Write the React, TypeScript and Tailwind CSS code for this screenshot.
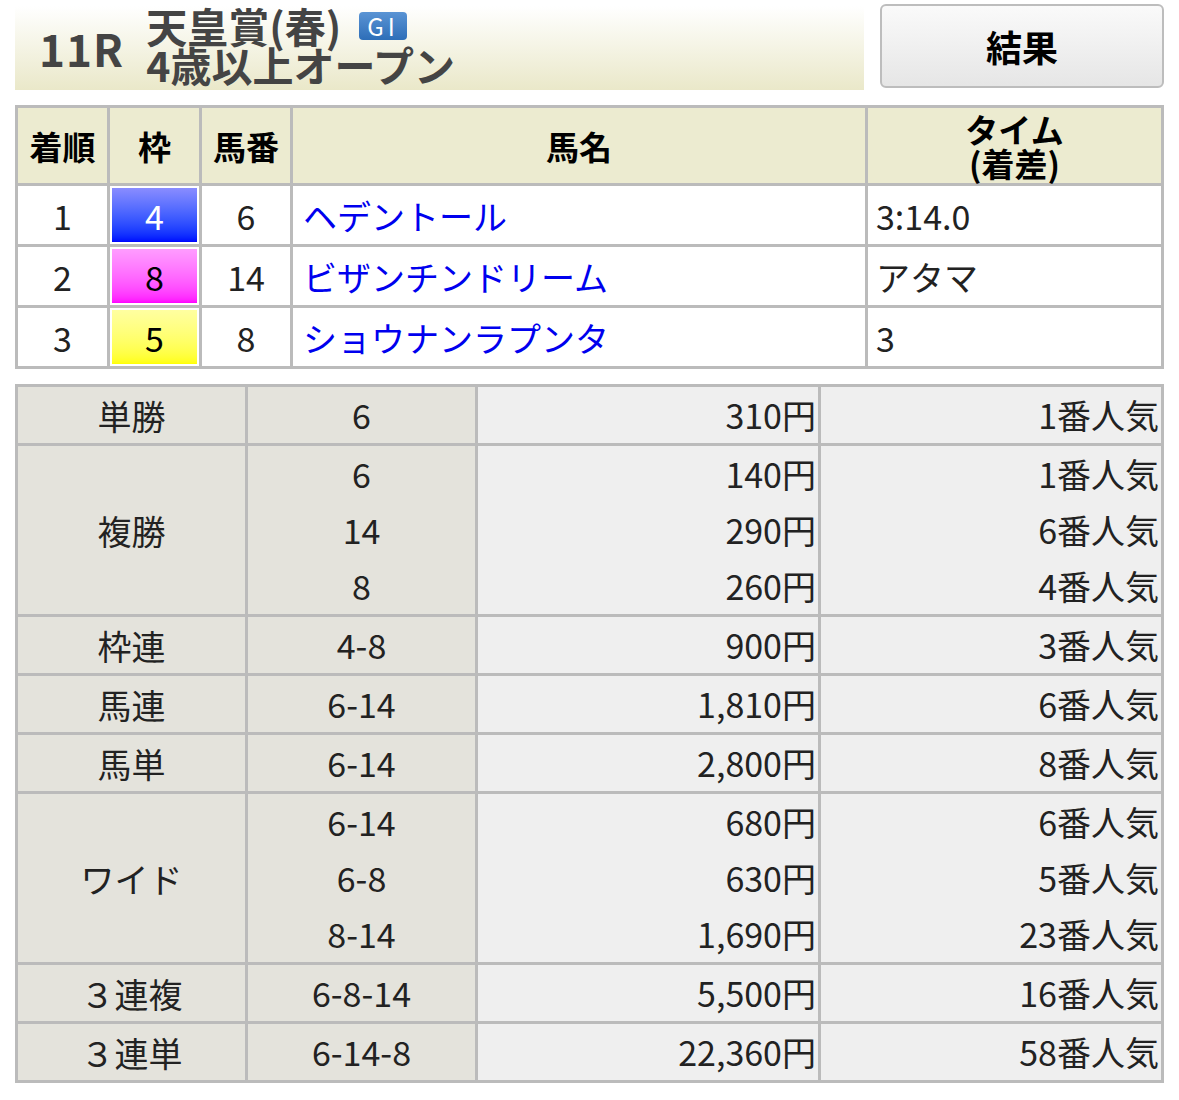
const FONT = { fontFamily: '"Noto Sans CJK JP", "Noto Sans", sans-serif' };

const results = [
  { rank: "1", waku: "4", num: "6", name: "ヘデントール", time: "3:14.0", cls: "bg-gradient-to-b from-[#8a8cff] to-[#0000ff] text-white" },
  { rank: "2", waku: "8", num: "14", name: "ビザンチンドリーム", time: "アタマ", cls: "bg-gradient-to-b from-[#ff9cff] to-[#ff00ff] text-black" },
  { rank: "3", waku: "5", num: "8", name: "ショウナンラプンタ", time: "3", cls: "bg-gradient-to-b from-[#ffffa0] to-[#ffff00] text-black" },
];

const payouts: { label: string; rows: [string, string, string][] }[] = [
  { label: "単勝", rows: [["6", "310円", "1番人気"]] },
  { label: "複勝", rows: [["6", "140円", "1番人気"], ["14", "290円", "6番人気"], ["8", "260円", "4番人気"]] },
  { label: "枠連", rows: [["4-8", "900円", "3番人気"]] },
  { label: "馬連", rows: [["6-14", "1,810円", "6番人気"]] },
  { label: "馬単", rows: [["6-14", "2,800円", "8番人気"]] },
  { label: "ワイド", rows: [["6-14", "680円", "6番人気"], ["6-8", "630円", "5番人気"], ["8-14", "1,690円", "23番人気"]] },
  { label: "３連複", rows: [["6-8-14", "5,500円", "16番人気"]] },
  { label: "３連単", rows: [["6-14-8", "22,360円", "58番人気"]] },
];

export default function App() {
  const th = "border-[3px] border-[#bbbbbb] bg-[#ecebd0] font-bold text-[33px] leading-[34px] text-black";
  const td = "border-[3px] border-[#bbbbbb] h-[61px] text-[34px]";
  return (
    <div className="w-[1179px] bg-white pt-[4px] px-[15px] pb-[10px] text-[#222]" style={FONT}>
      <div className="flex items-stretch h-[86px]">
        <div className="flex-1 flex items-center bg-gradient-to-b from-white to-[#eae8c9] pl-[24px] mt-[2px]">
          <span className="text-[44px] font-bold text-[#444] mr-[22px] tracking-wide">11R</span>
          <div className="flex flex-col text-[#444] font-bold text-[41px] leading-[39px] -mt-[6px]">
            <div className="flex items-center">
              天皇賞(春)
              <span className="ml-[18px] bg-gradient-to-b from-[#5a94d4] to-[#2d6eb8] text-white text-[24px] leading-[28px] px-[8px] rounded-[4px] tracking-[4px] font-normal">GI</span>
            </div>
            <div>4歳以上オープン</div>
          </div>
        </div>
        <div className="w-[284px] ml-[16px] mb-[2px] rounded-[6px] border-2 border-[#bdbdbd] bg-gradient-to-b from-[#fafafa] to-[#e6e6e6] flex items-center justify-center text-[36px] font-bold text-black">
          結果
        </div>
      </div>

      <table className="w-full mt-[15px] border-collapse text-center table-fixed">
        <colgroup>
          <col className="w-[92px]" /><col className="w-[92px]" /><col className="w-[91px]" /><col className="w-[575px]" /><col />
        </colgroup>
        <thead>
          <tr className="h-[78px]">
            <th className={th}>着順</th>
            <th className={th}>枠</th>
            <th className={th}>馬番</th>
            <th className={th}>馬名</th>
            <th className={th}>タイム<br />(着差)</th>
          </tr>
        </thead>
        <tbody>
          {results.map((r) => (
            <tr key={r.rank}>
              <td className={td}>{r.rank}</td>
              <td className={td + " p-[2px]"}>
                <div className={"h-full min-h-[53px] flex items-center justify-center " + r.cls}>{r.waku}</div>
              </td>
              <td className={td}>{r.num}</td>
              <td className={td + " text-left pl-[10px] text-[#0000ee]"}>{r.name}</td>
              <td className={td + " text-left pl-[8px]"}>{r.time}</td>
            </tr>
          ))}
        </tbody>
      </table>

      <table className="w-full mt-[15px] border-collapse table-fixed text-[34px]">
        <colgroup>
          <col className="w-[230px]" /><col className="w-[230px]" /><col className="w-[343px]" /><col />
        </colgroup>
        <tbody>
          {payouts.map((p) => (
            <tr key={p.label}>
              <td className="border-[3px] border-[#bbbbbb] bg-[#e4e3dc] text-center h-[56px]">{p.label}</td>
              <td className="border-[3px] border-[#bbbbbb] bg-[#e4e3dc] text-center">
                {p.rows.map((r) => <div key={r[0]} className="h-[56px] leading-[56px]">{r[0]}</div>)}
              </td>
              <td className="border-[3px] border-[#bbbbbb] bg-[#efefef] text-right pr-[2px]">
                {p.rows.map((r) => <div key={r[0]} className="h-[56px] leading-[56px]">{r[1]}</div>)}
              </td>
              <td className="border-[3px] border-[#bbbbbb] bg-[#efefef] text-right pr-[2px]">
                {p.rows.map((r) => <div key={r[0]} className="h-[56px] leading-[56px]">{r[2]}</div>)}
              </td>
            </tr>
          ))}
        </tbody>
      </table>
    </div>
  );
}
